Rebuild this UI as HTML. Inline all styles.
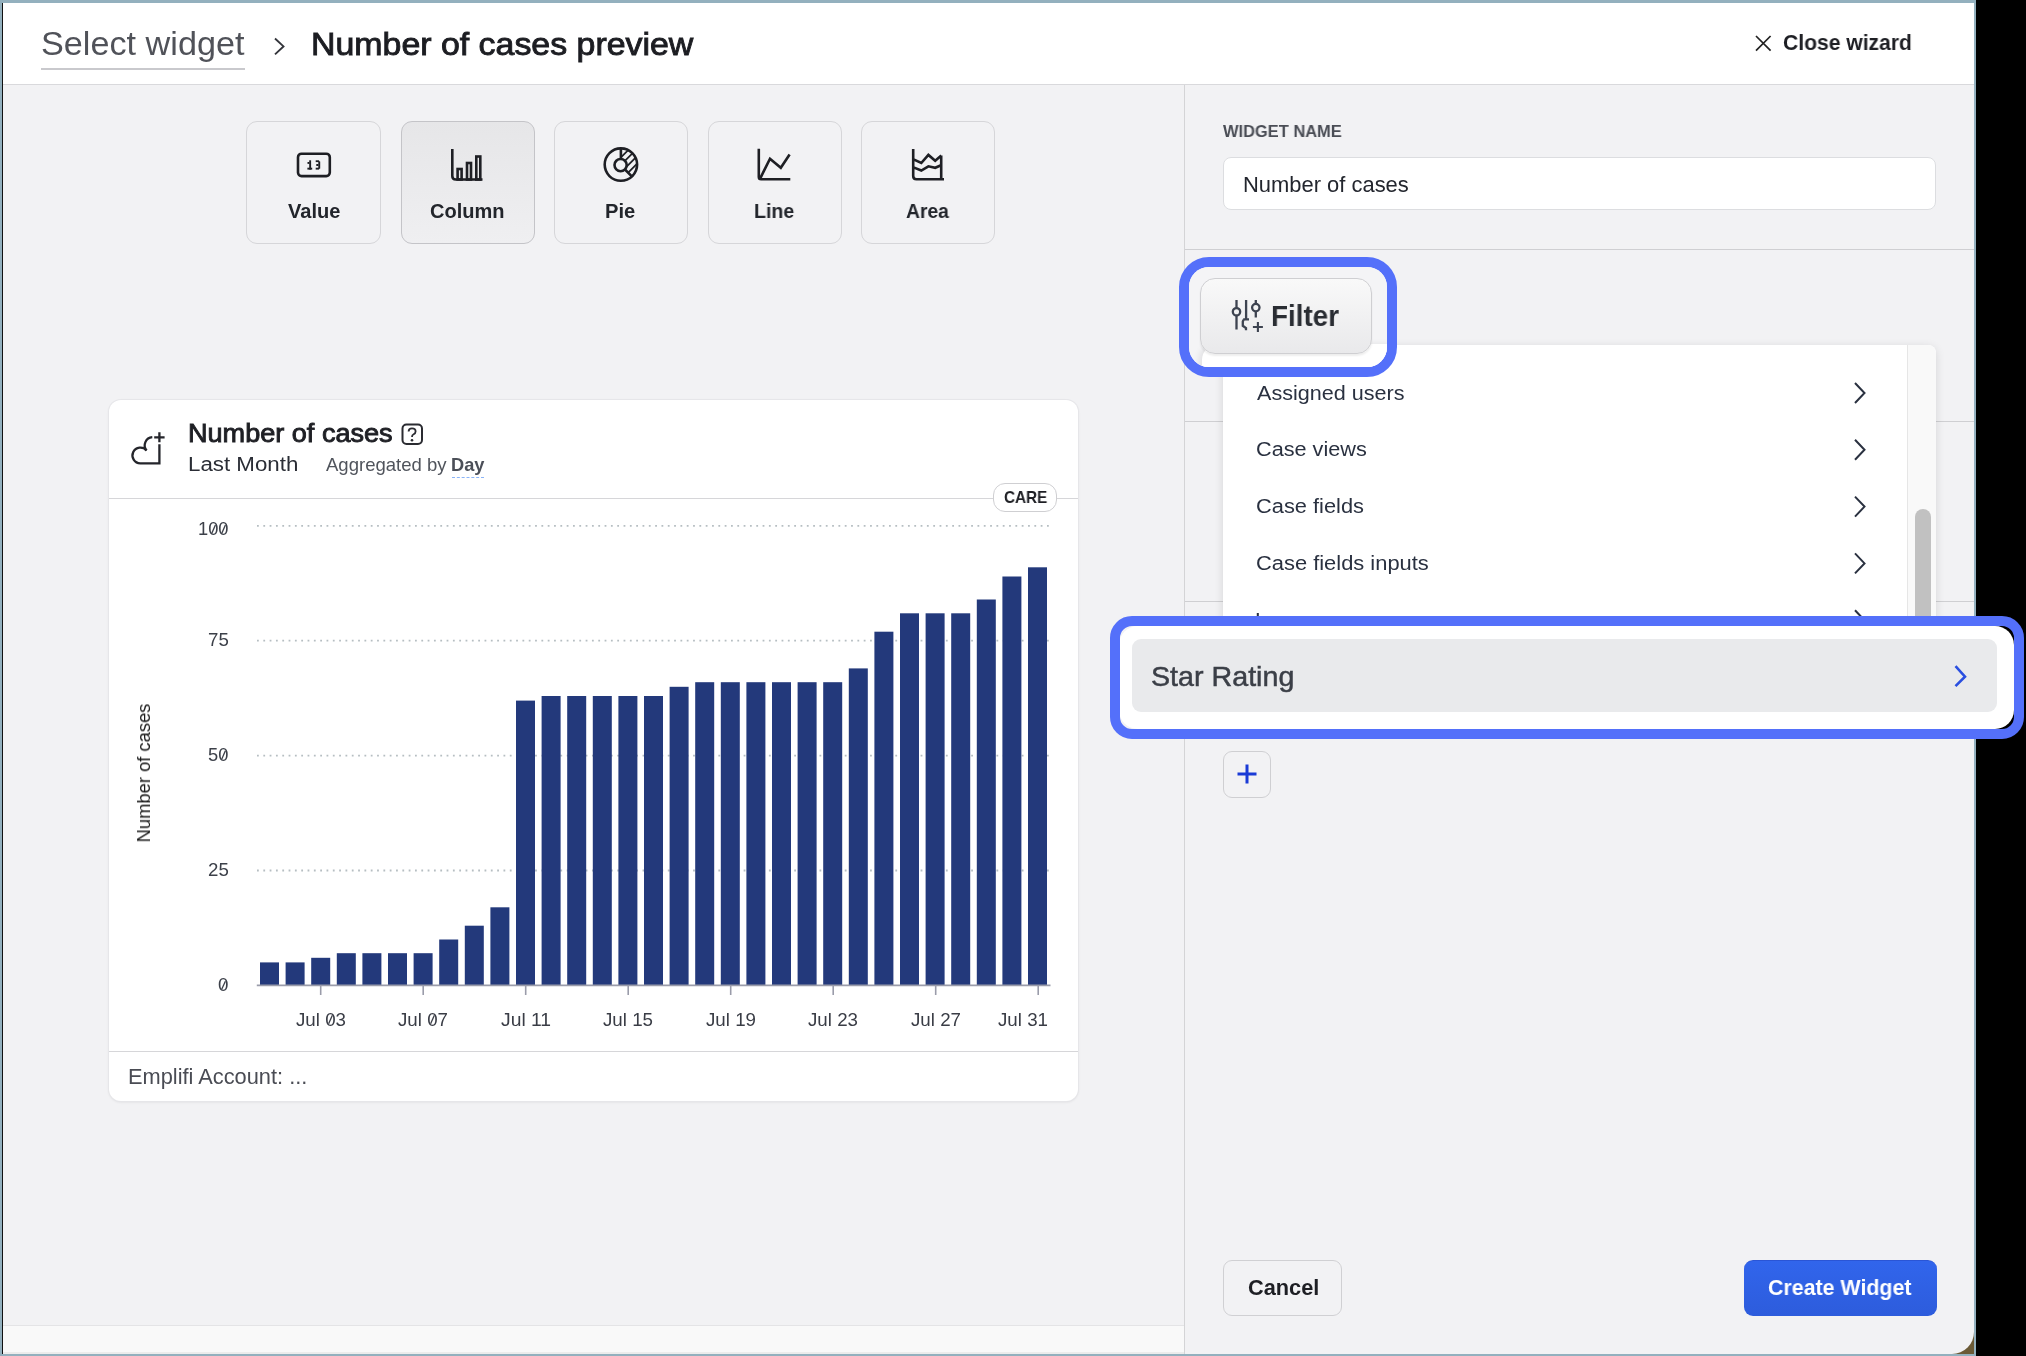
<!DOCTYPE html>
<html><head><meta charset="utf-8">
<style>
*{margin:0;padding:0;box-sizing:border-box}
html,body{width:2026px;height:1356px;overflow:hidden;background:#000}
body{position:relative;font-family:"Liberation Sans",sans-serif;color:#1e1f24}
.a{position:absolute}
.t{position:absolute;white-space:nowrap;line-height:1;transform-origin:0 0;will-change:transform}
svg{position:absolute;overflow:visible}
</style></head><body>
<!-- window frame -->
<div class="a" style="left:0;top:0;width:1976px;height:1356px;background:#93b0be"></div>
<div class="a" style="left:2px;top:3px;width:1px;height:1351px;background:#111"></div>
<div class="a" style="left:1950px;top:1328px;width:24px;height:26px;background:#6b5a36"></div>
<div class="a" style="left:3px;top:3px;width:1971px;height:1351px;background:#f2f2f4;border-bottom-right-radius:22px"></div>
<div class="a" style="left:3px;top:1325px;width:1181px;height:1px;background:#e4e4e6"></div>
<div class="a" style="left:3px;top:1326px;width:1181px;height:26px;background:#f9f9f9"></div>
<div class="a" style="left:3px;top:1352px;width:1181px;height:2px;background:#ececec"></div>

<!-- header -->
<div class="a" style="left:3px;top:3px;width:1971px;height:82px;background:#fff;border-bottom:1px solid #d9d9dc"></div>
<div class="t" style="left:40.73px;top:27.06px;font-size:33.24px;font-weight:400;color:#505259;font-family:'Liberation Sans',sans-serif;transform:scaleX(1.0296)">Select widget</div>
<div class="a" style="left:41px;top:68px;width:204px;height:2px;background:#c9c9cd"></div>
<svg style="left:0;top:0" width="300" height="80"><path d="M275 38.5 L283.5 46.4 L275 54.4" fill="none" stroke="#33353b" stroke-width="1.9"/></svg>
<div class="t" style="left:311.00px;top:28.69px;font-size:31.55px;font-weight:400;color:#1c1d22;font-family:'Liberation Sans',sans-serif;transform:scaleX(1.0741);-webkit-text-stroke:0.9px #1c1d22">Number of cases preview</div>
<svg style="left:0;top:0" width="2000" height="80"><path d="M1756 36 L1770.6 50.6 M1770.6 36 L1756 50.6" fill="none" stroke="#222" stroke-width="1.7"/></svg>
<div class="t" style="left:1782.54px;top:32.77px;font-size:21.41px;font-weight:700;color:#1e1f24;font-family:'Liberation Sans',sans-serif;transform:scaleX(0.9850)">Close wizard</div>

<!-- chart type cards -->
<div class="a" style="left:246px;top:121px;width:134.5px;height:122.5px;border:1px solid #d6d6d9;border-radius:11px"></div>
<div class="a" style="left:400.5px;top:121px;width:134.5px;height:122.5px;border:1px solid #c4c4c8;border-radius:11px;background:linear-gradient(#e6e6e8,#efeff1)"></div>
<div class="a" style="left:554px;top:121px;width:134px;height:122.5px;border:1px solid #d6d6d9;border-radius:11px"></div>
<div class="a" style="left:707.5px;top:121px;width:134px;height:122.5px;border:1px solid #d6d6d9;border-radius:11px"></div>
<div class="a" style="left:861px;top:121px;width:134px;height:122.5px;border:1px solid #d6d6d9;border-radius:11px"></div>
<div class="t" style="left:287.80px;top:201.27px;font-size:20.00px;font-weight:700;color:#22252b;font-family:'Liberation Sans',sans-serif;transform:scaleX(1.0027)">Value</div><div class="t" style="left:430.38px;top:201.27px;font-size:20.00px;font-weight:700;color:#22252b;font-family:'Liberation Sans',sans-serif;transform:scaleX(0.9939)">Column</div><div class="t" style="left:605.34px;top:201.27px;font-size:20.00px;font-weight:700;color:#22252b;font-family:'Liberation Sans',sans-serif;transform:scaleX(1.0081)">Pie</div><div class="t" style="left:753.58px;top:201.27px;font-size:20.00px;font-weight:700;color:#22252b;font-family:'Liberation Sans',sans-serif;transform:scaleX(0.9780)">Line</div><div class="t" style="left:906.30px;top:201.27px;font-size:20.00px;font-weight:700;color:#22252b;font-family:'Liberation Sans',sans-serif;transform:scaleX(0.9642)">Area</div>
<svg style="left:0;top:0" width="2026" height="300"><g fill="none" stroke="#1e1f24" stroke-width="2.6">
<rect x="298" y="153.7" width="31.8" height="22.4" rx="3.5"/>
<path d="M452.3 149 V176 Q452.3 179.5 455.8 179.5 H482.5"/>
<rect x="457.6" y="169" width="4" height="10.5"/>
<rect x="467" y="163" width="4" height="16.5"/>
<rect x="476.3" y="156.5" width="4" height="23"/>
<circle cx="620.9" cy="164.6" r="16.2"/>
<circle cx="620.6" cy="165.1" r="6.1"/>
<path d="M620.9 148.5 V159 M625 169.5 L632.3 176.8"/>
<path d="M758.8 148.7 V177 Q758.8 179.3 761.1 179.3 H790.3 M760.5 177.8 L770 158.7 L780.8 167.8 L789.6 154.5"/>
<path d="M913.2 148.9 V176 Q913.2 179.3 916.5 179.3 H944 M941.2 155.6 V179 M913.5 159.3 L921.3 163 L928.4 154.9 L935.2 160.7 L941.3 155.6 M913.5 167.4 L921.3 170.5 L928.4 166.3 L935.2 167.8 L941 165.2"/>
</g>
<defs><clipPath id="pc1"><path d="M620.9 164.6 V140 H660 V200 L650.9 194.6 Z"/></clipPath><clipPath id="pc2" clip-rule="evenodd"><path clip-rule="evenodd" d="M604.7 164.6 A16.2 16.2 0 1 0 637.1 164.6 A16.2 16.2 0 1 0 604.7 164.6 Z M614.5 165.1 A6.1 6.1 0 1 0 626.7 165.1 A6.1 6.1 0 1 0 614.5 165.1 Z"/></clipPath></defs>
<g clip-path="url(#pc1)"><g clip-path="url(#pc2)"><g fill="none" stroke="#1e1f24" stroke-width="1.7"><path d="M598 180.3 L640 138.3 M605.5 180.3 L647.5 138.3 M613 180.3 L655 138.3 M620.5 180.3 L662.5 138.3"/></g></g></g>
<g fill="#1e1f24"><rect x="309.2" y="160.3" width="1.9" height="9.3"/><rect x="307.5" y="162" width="1.9" height="1.9"/><rect x="307.4" y="167.7" width="4.8" height="1.9"/><rect x="315.7" y="160.3" width="3.4" height="1.8"/><rect x="318.3" y="161.2" width="1.9" height="7.6" rx="0.6"/><rect x="316.3" y="164" width="2.2" height="2"/><rect x="315.7" y="167.7" width="3.4" height="1.9"/></g>
</svg>

<!-- chart card -->
<div class="a" style="left:109px;top:400px;width:969px;height:701px;background:#fff;border-radius:12px;box-shadow:0 0 0 1px #e6e6e9,0 1px 3px rgba(0,0,0,0.1)"></div>
<div class="a" style="left:109px;top:498px;width:969px;height:1px;background:#d6d6d9"></div>
<div class="a" style="left:109px;top:1051px;width:969px;height:1px;background:#d6d6d9"></div>
<svg style="left:0;top:0" width="2026" height="1356">
<g stroke="#b6bec2" stroke-width="1.8" stroke-dasharray="1.8 4.52"><line x1="257" y1="525.9" x2="1050" y2="525.9"/><line x1="257" y1="640.7" x2="1050" y2="640.7"/><line x1="257" y1="755.6" x2="1050" y2="755.6"/><line x1="257" y1="870.5" x2="1050" y2="870.5"/></g>
<g fill="#23397b"><rect x="260.0" y="962.4" width="19" height="23.0"/><rect x="285.6" y="962.4" width="19" height="23.0"/><rect x="311.2" y="957.8" width="19" height="27.6"/><rect x="336.8" y="953.2" width="19" height="32.2"/><rect x="362.4" y="953.2" width="19" height="32.2"/><rect x="388.0" y="953.2" width="19" height="32.2"/><rect x="413.6" y="953.2" width="19" height="32.2"/><rect x="439.2" y="939.5" width="19" height="45.9"/><rect x="464.8" y="925.7" width="19" height="59.7"/><rect x="490.4" y="907.3" width="19" height="78.1"/><rect x="516.0" y="700.6" width="19" height="284.8"/><rect x="541.6" y="696.0" width="19" height="289.4"/><rect x="567.2" y="696.0" width="19" height="289.4"/><rect x="592.8" y="696.0" width="19" height="289.4"/><rect x="618.4" y="696.0" width="19" height="289.4"/><rect x="644.0" y="696.0" width="19" height="289.4"/><rect x="669.6" y="686.8" width="19" height="298.6"/><rect x="695.2" y="682.2" width="19" height="303.2"/><rect x="720.8" y="682.2" width="19" height="303.2"/><rect x="746.4" y="682.2" width="19" height="303.2"/><rect x="772.0" y="682.2" width="19" height="303.2"/><rect x="797.6" y="682.2" width="19" height="303.2"/><rect x="823.2" y="682.2" width="19" height="303.2"/><rect x="848.8" y="668.4" width="19" height="317.0"/><rect x="874.4" y="631.7" width="19" height="353.7"/><rect x="900.0" y="613.3" width="19" height="372.1"/><rect x="925.6" y="613.3" width="19" height="372.1"/><rect x="951.2" y="613.3" width="19" height="372.1"/><rect x="976.8" y="599.5" width="19" height="385.9"/><rect x="1002.4" y="576.5" width="19" height="408.9"/><rect x="1028.0" y="567.3" width="19" height="418.1"/></g>
<line x1="256.8" y1="985.4" x2="1050.5" y2="985.4" stroke="#9a9caa" stroke-width="1.6"/>
<g stroke="#9a9caa" stroke-width="1.6"><line x1="320.7" y1="985.4" x2="320.7" y2="995"/><line x1="423.2" y1="985.4" x2="423.2" y2="995"/><line x1="525.7" y1="985.4" x2="525.7" y2="995"/><line x1="628.2" y1="985.4" x2="628.2" y2="995"/><line x1="730.7" y1="985.4" x2="730.7" y2="995"/><line x1="833.2" y1="985.4" x2="833.2" y2="995"/><line x1="935.7" y1="985.4" x2="935.7" y2="995"/><line x1="1038.2" y1="985.4" x2="1038.2" y2="995"/></g>
</svg>
<div class="t" style="left:197.96px;top:520.40px;font-size:18.31px;font-weight:400;color:#3c4049;font-family:'Liberation Sans',sans-serif;transform:scaleX(0.9983)">100</div><div class="t" style="left:207.97px;top:631.40px;font-size:18.31px;font-weight:400;color:#3c4049;font-family:'Liberation Sans',sans-serif;transform:scaleX(1.0205)">75</div><div class="t" style="left:208.28px;top:746.10px;font-size:18.31px;font-weight:400;color:#3c4049;font-family:'Liberation Sans',sans-serif;transform:scaleX(0.9903)">50</div><div class="t" style="left:207.97px;top:861.10px;font-size:18.31px;font-weight:400;color:#3c4049;font-family:'Liberation Sans',sans-serif;transform:scaleX(1.0205)">25</div><div class="t" style="left:218.01px;top:976.30px;font-size:18.31px;font-weight:400;color:#3c4049;font-family:'Liberation Sans',sans-serif;transform:scaleX(1.0268)">0</div>
<div class="t" style="left:144px;top:772.7px;font-size:18px;color:#1a1a1a;transform-origin:50% 50%;transform:translate(-50%,-50%) rotate(-90deg) scaleX(1.02)">Number of cases</div>
<div class="t" style="left:295.91px;top:1010.52px;font-size:18.17px;font-weight:400;color:#3a3d46;font-family:'Liberation Sans',sans-serif;transform:scaleX(1.0324)">Jul 03</div><div class="t" style="left:398.41px;top:1010.52px;font-size:18.17px;font-weight:400;color:#3a3d46;font-family:'Liberation Sans',sans-serif;transform:scaleX(1.0324)">Jul 07</div><div class="t" style="left:500.90px;top:1010.52px;font-size:18.17px;font-weight:400;color:#3a3d46;font-family:'Liberation Sans',sans-serif;transform:scaleX(1.0626)">Jul 11</div><div class="t" style="left:603.41px;top:1010.52px;font-size:18.17px;font-weight:400;color:#3a3d46;font-family:'Liberation Sans',sans-serif;transform:scaleX(1.0324)">Jul 15</div><div class="t" style="left:705.91px;top:1010.52px;font-size:18.17px;font-weight:400;color:#3a3d46;font-family:'Liberation Sans',sans-serif;transform:scaleX(1.0324)">Jul 19</div><div class="t" style="left:808.41px;top:1010.52px;font-size:18.17px;font-weight:400;color:#3a3d46;font-family:'Liberation Sans',sans-serif;transform:scaleX(1.0324)">Jul 23</div><div class="t" style="left:910.91px;top:1010.52px;font-size:18.17px;font-weight:400;color:#3a3d46;font-family:'Liberation Sans',sans-serif;transform:scaleX(1.0324)">Jul 27</div><div class="t" style="left:997.71px;top:1010.52px;font-size:18.17px;font-weight:400;color:#3a3d46;font-family:'Liberation Sans',sans-serif;transform:scaleX(1.0324)">Jul 31</div>
<div class="t" style="left:128.00px;top:1066.79px;font-size:21.27px;font-weight:400;color:#4a4c54;font-family:'Liberation Sans',sans-serif;transform:scaleX(1.0253)">Emplifi Account: ...</div>
<svg style="left:0;top:0" width="2026" height="1356"><line x1="211.6" y1="533.7" x2="215.4" y2="525.1" stroke="#3c4049" stroke-width="1.3"/><line x1="221.6" y1="533.7" x2="225.4" y2="525.1" stroke="#3c4049" stroke-width="1.3"/><line x1="221.6" y1="759.4" x2="225.4" y2="750.8" stroke="#3c4049" stroke-width="1.3"/><line x1="221.6" y1="989.6" x2="225.4" y2="981.2" stroke="#3c4049" stroke-width="1.3"/><line x1="328.6" y1="1023.7" x2="332.4" y2="1015.2" stroke="#3a3d46" stroke-width="1.3"/><line x1="430.6" y1="1023.7" x2="434.4" y2="1015.2" stroke="#3a3d46" stroke-width="1.3"/></svg>
<svg style="left:125px;top:420px" width="60" height="55" viewBox="0 0 60 55"><g fill="none" stroke="#24252b" stroke-width="2.3" stroke-linecap="butt">
<path d="M34.4 24.3 V43.4 H15.3 A7.9 7.9 0 1 1 21.5 30.5"/>
<path d="M21.5 30.5 A8.2 8.2 0 0 1 27.3 17.2"/>
<path d="M29.2 17.4 H39.6 M34.4 12.2 V22.3"/></g></svg>
<div class="t" style="left:188.13px;top:421.46px;font-size:25.92px;font-weight:400;color:#1e1f24;font-family:'Liberation Sans',sans-serif;transform:scaleX(1.0448);-webkit-text-stroke:0.9px #1e1f24">Number of cases</div>
<svg style="left:401px;top:423px" width="23" height="23"><rect x="1.5" y="1.5" width="19.5" height="19.5" rx="4" fill="none" stroke="#2a2b31" stroke-width="2"/><path d="M7.6 8.4 Q7.6 5.3 11 5.3 Q14.6 5.3 14.6 8.5 Q14.6 10.5 12.3 11.5 Q11 12.1 11 13.9" fill="none" stroke="#2a2b31" stroke-width="1.8"/><circle cx="11" cy="17.3" r="1.3" fill="#2a2b31"/></svg>
<div class="t" style="left:188.06px;top:454.49px;font-size:20.56px;font-weight:400;color:#2a2d35;font-family:'Liberation Sans',sans-serif;transform:scaleX(1.0852)">Last Month</div><div class="t" style="left:325.60px;top:456.87px;font-size:17.75px;font-weight:400;color:#50545c;font-family:'Liberation Sans',sans-serif;transform:scaleX(1.0447)">Aggregated by</div><div class="t" style="left:450.56px;top:456.87px;font-size:17.75px;font-weight:700;color:#4b4f58;font-family:'Liberation Sans',sans-serif;transform:scaleX(1.0267)">Day</div>
<div class="a" style="left:452px;top:476.5px;width:32px;height:1px;border-top:1.5px dashed #8ab4f8"></div>
<div class="a" style="left:993px;top:483px;width:64px;height:29px;background:#fff;border:1px solid #cfcfd2;border-radius:12px"></div>
<div class="t" style="left:1004.02px;top:489.17px;font-size:16.34px;font-weight:700;color:#1e1f24;font-family:'Liberation Sans',sans-serif;transform:scaleX(0.9371)">CARE</div>

<!-- right panel divider & lines -->
<div class="a" style="left:1184px;top:85px;width:1px;height:1269px;background:#d4d4d6"></div>
<div class="a" style="left:1185px;top:249px;width:789px;height:1px;background:#cfcfd2"></div>
<div class="a" style="left:1185px;top:421px;width:789px;height:1px;background:#cfcfd2"></div>
<div class="a" style="left:1185px;top:601px;width:789px;height:1px;background:#cfcfd2"></div>
<div class="t" style="left:1223.40px;top:123.61px;font-size:16.76px;font-weight:700;color:#4a4d55;font-family:'Liberation Sans',sans-serif;transform:scaleX(0.9818)">WIDGET NAME</div>
<div class="a" style="left:1223px;top:157px;width:713px;height:53px;background:#fff;border:1px solid #dcdde0;border-radius:8px"></div>

<div class="t" style="left:1242.59px;top:173.85px;font-size:21.55px;font-weight:400;color:#23262e;font-family:'Liberation Sans',sans-serif;transform:scaleX(1.0179)">Number of cases</div>

<!-- dropdown -->
<div class="a" style="left:1222.5px;top:345px;width:713px;height:290px;background:#fff;border-radius:8px 8px 0 0;box-shadow:0 2px 10px rgba(0,0,0,0.12)"></div>
<div class="a" style="left:1907px;top:345px;width:29px;height:290px;background:#f9f9f9;border-left:1px solid #e6e6e6;border-top-right-radius:8px"></div>
<div class="a" style="left:1915px;top:509px;width:16px;height:130px;background:#c1c1c1;border-radius:8px"></div>
<div class="t" style="left:1257.00px;top:382.59px;font-size:20.56px;font-weight:400;color:#2a3140;font-family:'Liberation Sans',sans-serif;transform:scaleX(1.0497)">Assigned users</div><div class="t" style="left:1255.98px;top:439.39px;font-size:20.56px;font-weight:400;color:#2a3140;font-family:'Liberation Sans',sans-serif;transform:scaleX(1.0548)">Case views</div><div class="t" style="left:1255.98px;top:496.19px;font-size:20.56px;font-weight:400;color:#2a3140;font-family:'Liberation Sans',sans-serif;transform:scaleX(1.0618)">Case fields</div><div class="t" style="left:1255.97px;top:552.99px;font-size:20.56px;font-weight:400;color:#2a3140;font-family:'Liberation Sans',sans-serif;transform:scaleX(1.0653)">Case fields inputs</div><div class="t" style="left:1255.30px;top:609.79px;font-size:20.56px;font-weight:400;color:#2a3140;font-family:'Liberation Sans',sans-serif;transform:scaleX(1.0600)">Languages</div>
<svg style="left:0;top:0" width="2026" height="700"><g fill="none" stroke="#2a3140" stroke-width="2"><path d="M1855 383 L1864.5 393 L1855 403"/><path d="M1855 439.8 L1864.5 449.8 L1855 459.8"/><path d="M1855 496.6 L1864.5 506.6 L1855 516.6"/><path d="M1855 553.4 L1864.5 563.4 L1855 573.4"/><path d="M1855 610.2 L1864.5 620.2 L1855 630.2"/></g></svg>

<!-- filter highlight -->
<div class="a" style="left:1179.3px;top:257px;width:217.7px;height:120px;border:10.2px solid #5470fa;border-radius:30px;overflow:hidden">
  <div class="a" style="left:0;top:0;width:200px;height:100px;background:#f4f4f6"></div>
  <div class="a" style="left:13px;top:77px;width:190px;height:30px;background:#fff;border-top-left-radius:16px;box-shadow:-3px 0 6px rgba(0,0,0,0.08)"></div>
  <div class="a" style="left:10.8px;top:11.3px;width:172px;height:75.5px;border:1.5px solid #cfcfd2;border-radius:15px;background:linear-gradient(#f9f9f9,#e9e9eb);box-shadow:0 2px 2px rgba(0,0,0,0.07)"></div>
</div>
<svg style="left:1225px;top:292px" width="50" height="48"><g fill="none" stroke="#3d4350" stroke-width="2.3"><path d="M11.5 8 V16 M11.5 23.6 V37.5"/><circle cx="11.5" cy="19.8" r="3.7"/><path d="M21.1 8 V27.3 M18.2 27.3 H24 M18.6 27.8 L17.8 29.5 V33.8 L21 36 V38.3"/><path d="M30.8 8 V11.9 M30.8 19.4 V25.5"/><circle cx="30.8" cy="15.6" r="3.7"/><path d="M32.9 30 V40 M27.9 35 H37.9" stroke-width="2.1"/></g></svg>
<div class="t" style="left:1270.76px;top:300.96px;font-size:29.58px;font-weight:700;color:#2a2d33;font-family:'Liberation Sans',sans-serif;transform:scaleX(0.9408)">Filter</div>

<!-- star rating highlight -->
<div class="a" style="left:1119px;top:625.8px;width:895px;height:103.2px;background:#fff;border-radius:19px"></div>
<div class="a" style="left:1109.6px;top:616.3px;width:914.4px;height:122.9px;border:10px solid #5470fa;border-radius:22px"></div>
<div class="a" style="left:1131.8px;top:639.2px;width:865px;height:73.3px;background:#e9eaec;border-radius:9px"></div>
<div class="t" style="left:1151.15px;top:662.21px;font-size:28.45px;font-weight:400;color:#3b3f47;font-family:'Liberation Sans',sans-serif;transform:scaleX(1.0076);-webkit-text-stroke:0.5px #3b3f47">Star Rating</div>
<svg style="left:1950px;top:660px" width="20" height="32"><path d="M5.5 6.2 L15 16.6 L5.5 26.2" fill="none" stroke="#2a4fe0" stroke-width="2.6"/></svg>

<!-- + button -->
<div class="a" style="left:1223px;top:751px;width:48px;height:47px;border:1px solid #cfcfd2;border-radius:9px"></div>
<svg style="left:1237px;top:764px" width="20" height="20"><path d="M10 0.5 V19.5 M0.5 10 H19.5" stroke="#1a3bd6" stroke-width="3"/></svg>

<!-- footer buttons -->
<div class="a" style="left:1223px;top:1259.5px;width:119px;height:56px;border:1px solid #d0d0d3;border-radius:9px"></div>
<div class="t" style="left:1247.72px;top:1276.65px;font-size:21.55px;font-weight:700;color:#1e1f24;font-family:'Liberation Sans',sans-serif;transform:scaleX(1.0099)">Cancel</div>
<div class="a" style="left:1744px;top:1259.5px;width:193px;height:56px;background:linear-gradient(#3165ec,#2d5cdc);border-top:1px solid #2a55d6;border-radius:9px"></div>
<div class="t" style="left:1768.43px;top:1276.52px;font-size:21.83px;font-weight:700;color:#ffffff;font-family:'Liberation Sans',sans-serif;transform:scaleX(0.9788)">Create Widget</div>
</body></html>
